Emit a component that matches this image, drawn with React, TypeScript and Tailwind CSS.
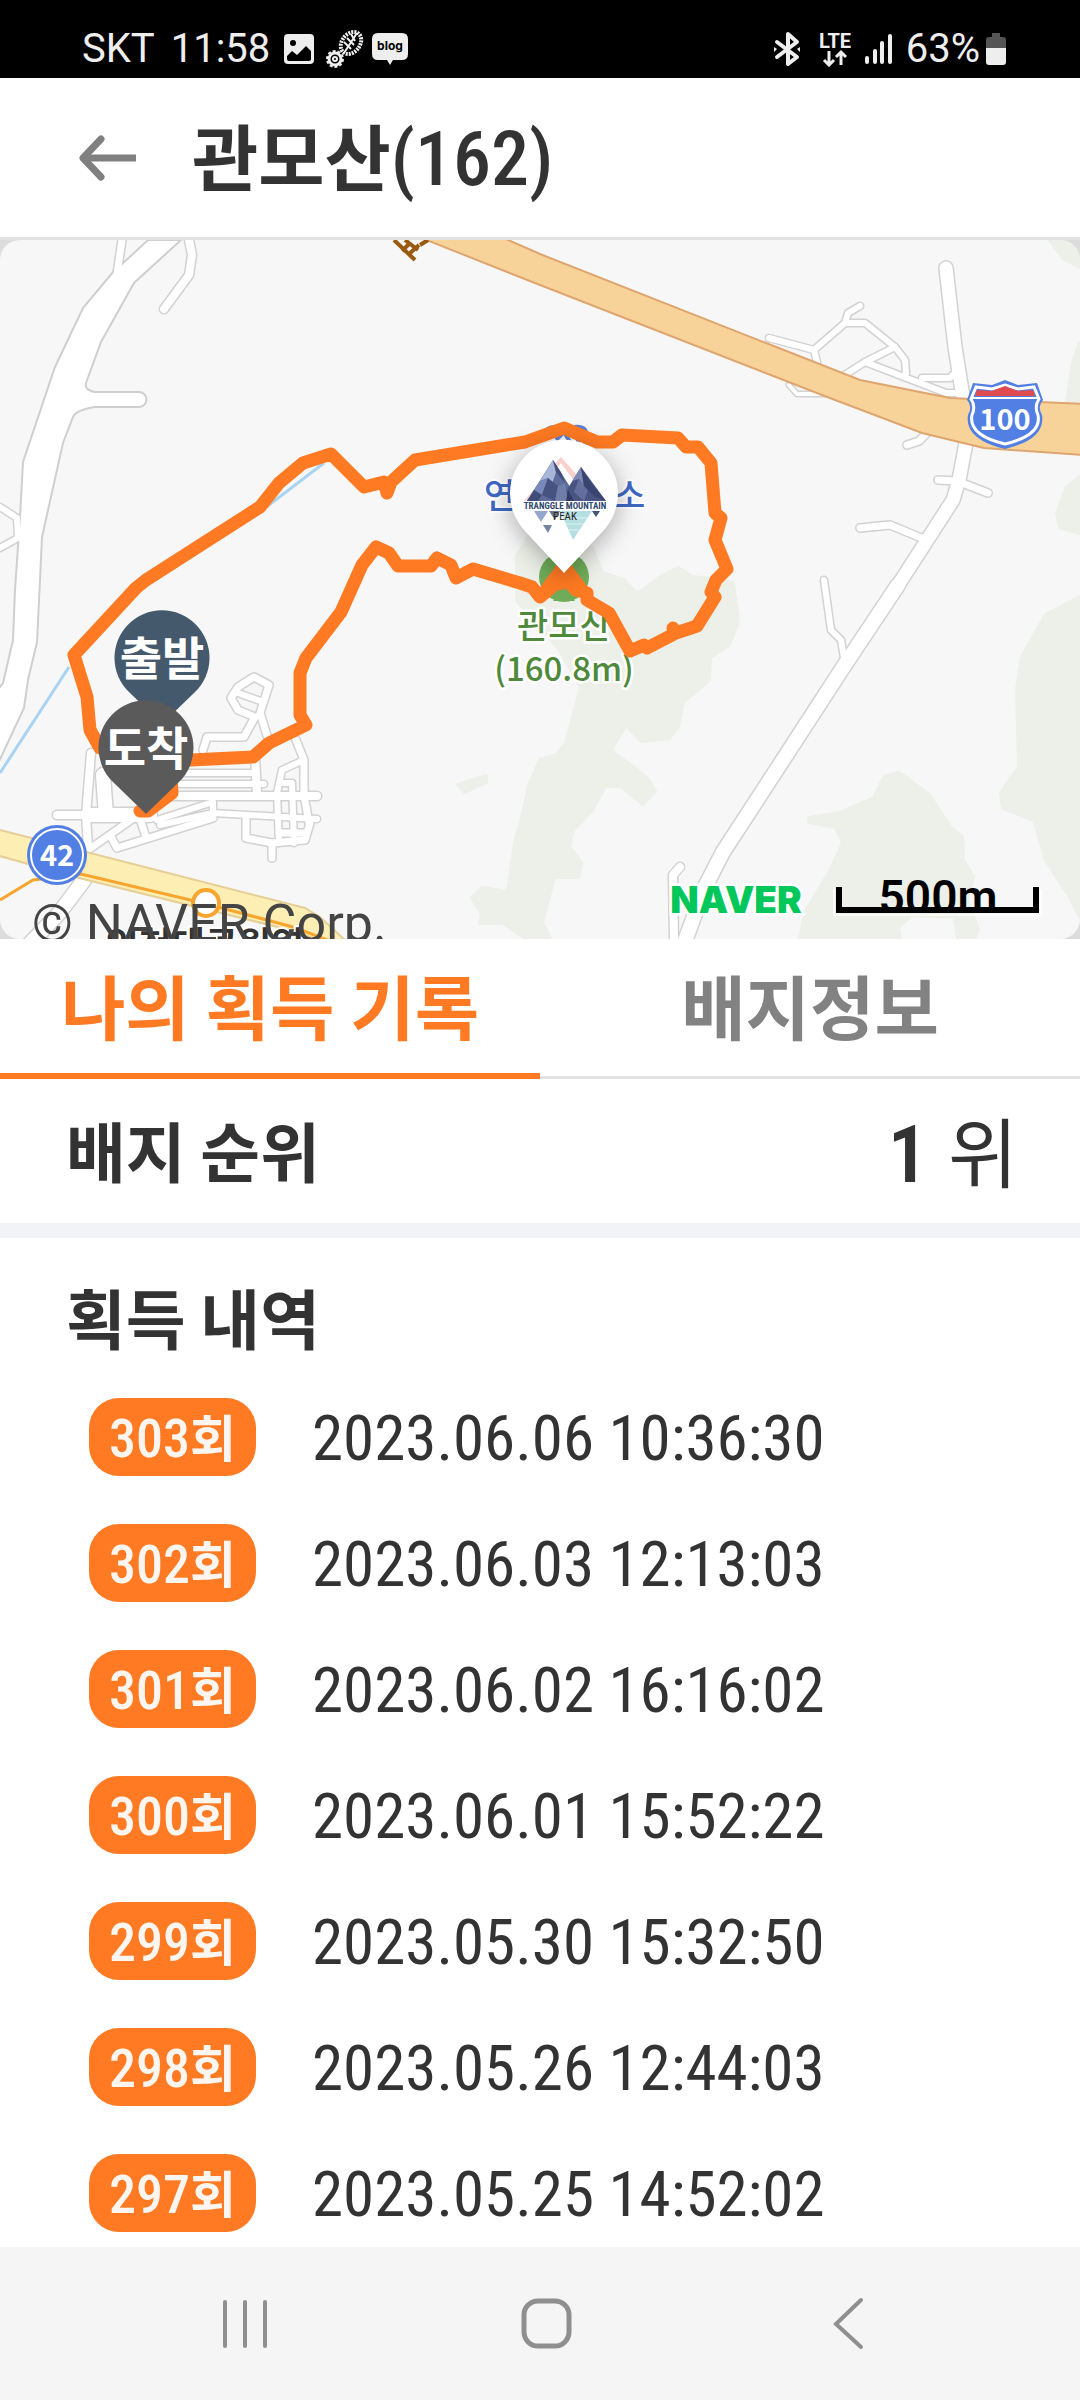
const records = [
  { count: 303, date: "2023.06.06 10:36:30" },
  { count: 302, date: "2023.06.03 12:13:03" },
  { count: 301, date: "2023.06.02 16:16:02" },
  { count: 300, date: "2023.06.01 15:52:22" },
  { count: 299, date: "2023.05.30 15:32:50" },
  { count: 298, date: "2023.05.26 12:44:03" },
  { count: 297, date: "2023.05.25 14:52:02" },
];

const forests = [
  "M517 556L530 535L564 530L592 548L602 573L624 580L636 593L642 591L659 578L678 568L692 577L719 580L733 583L738 622L729 645L710 657L709 680L683 702L678 727L669 738L642 741L626 725L612 748L614 753L647 778L655 791L643 804L621 786L605 786L592 810L573 830L569 847L581 863L578 877L554 877L542 923L550 939L527 939L503 923L480 923L482 914L472 898L482 888L508 892L515 843L524 810L529 785L540 760L557 755L566 743L581 687L560 650L517 600Z",
  "M458 785L486 776L486 782L465 792Z",
  "M809 818L840 813L874 798L884 777L898 773L908 779L929 795L950 827L962 837L963 860L973 877L967 900L978 930L974 939H958L955 917L912 915L898 927L900 939H800L805 913L829 873L843 843L836 827L809 822Z",
  "M1080 597L1046 615L1022 657L1017 690L1019 767L1001 793L1003 808L1034 820L1046 860L1070 897L1080 917Z",
  "M1080 477L1067 487L1057 513L1060 527L1080 533Z",
  "M1080 343L1073 363L1067 403H1080Z",
  "M1050 240L1063 258L1080 267V240Z",
];

const roads = [
  { d: "M122 240L117 274", w: 7 },
  { d: "M189 240L192 255L189 275L164 309", w: 8 },
  { d: "M0 507L17 518L18 538L0 548", w: 6 },
  { d: "M946 268L955 347L963 397L966 443L959 480L953 500L895 590", w: 13 },
  { d: "M898 585L844 666L781 763L723 852L705 887L685 941", w: 14 },
  { d: "M938 480L957 481L988 493", w: 7 },
  { d: "M860 528L890 525L924 539", w: 7 },
  { d: "M824 580L831 630L841 640L844 658", w: 6 },
  { d: "M907 445L919 441L928 432", w: 7 },
  { d: "M769 338L814 350L845 323L865 323L895 347L905 360L906 373", w: 6 },
  { d: "M845 323L848 313L860 306M814 350L817 362", w: 6 },
  { d: "M840 378L865 362L895 347M865 362L946 393H962", w: 6 },
  { d: "M922 378H950L957 370", w: 6 },
  { d: "M789 385L797 394H825", w: 4 },
  { d: "M680 867L673 875L674 941", w: 8 },
  { d: "M84 880L60 912L24 950", w: 14 },
  // housing estate
  { d: "M57 815H104M91 753L86 815L88 847", w: 8 },
  { d: "M103 775L106 815M90 815H150", w: 14 },
  { d: "M203 750L207 737H244L255 717L238 710L231 698L238 687L254 677L269 685L260 713L269 742", w: 7 },
  { d: "M238 693L263 702", w: 6 },
  { d: "M183 773H255M180 784H264", w: 6 },
  { d: "M172 796H317M255 757L257 793", w: 8 },
  { d: "M296 740L304 760V795L309 823", w: 7 },
  { d: "M304 760L282 770L277 793L279 843M280 783H292L294 843", w: 6 },
  { d: "M157 820L213 802V817M160 825L213 813L317 819", w: 6 },
  { d: "M246 820V838L272 843L305 840L310 823M279 833H305", w: 7 },
  { d: "M272 843V858", w: 7 },
  { d: "M88 850L131 820M110 835L117 848L213 818M141 822L146 837", w: 7 },
];

const leftRoad =
  "M148 240L121 265L113 272L83 308L55 367L23 462L20 517L15 590L13 640L3 683L-4 692V768L24 708L28 680L37 642L40 580L42 537L63 443L73 417Q76 410 95 407H139A7 7 0 0 0 139 392H95Q84 390 86 383L101 342L134 283L181 240Z";

const track =
  "M100 748L90 730L87 697L74 655L136 588L146 580L260 507L279 483L303 463L331 454L364 487L384 482L387 493L391 482L415 460L525 442L564 428L597 442H613L622 435L678 438L686 447H698L711 463L715 513L721 518L715 540L727 569L716 580L711 592L715 597L697 626L676 633L673 628L676 633L647 648L644 645L630 651L609 613L587 600V593L576 590L564 577L540 597L532 587L520 583L473 569L456 578L451 565L437 558L431 566H398L389 553L376 547L362 565L341 612L306 658L300 673V715L306 725L269 743L253 757L170 761L172 793L148 811H140";

function StatusBar() {
  return (
    <div className="flex items-center bg-black pt-5 pr-[72px] pl-[82px] text-[40px] leading-[58px] text-[#eeeeee]">
      <span>SKT</span>
      <span className="ml-4">11:58</span>
      <svg className="ml-3 h-[34px] w-[34px]" viewBox="0 0 34 34">
        <rect x="2" y="2" width="30" height="30" rx="4" fill="#eee" />
        <circle cx="11" cy="11" r="3" fill="#000" />
        <path d="M5 24L10 19L15 23L24 14L29 19V27Q29 29 27 29H7Q5 29 5 27Z" fill="#000" />
      </svg>
      <svg className="ml-2 h-10 w-10" viewBox="0 0 40 40" fill="none" stroke="#eee">
        <ellipse cx="27" cy="14" rx="9" ry="12" transform="rotate(38 27 14)" strokeWidth="4" strokeDasharray="2 1" />
        <path d="M33 4L20 24M27 5L31 12M23 9L30 16M20 13L27 20" strokeWidth="2" />
        <circle cx="11" cy="30" r="6" strokeWidth="3" />
        <circle cx="11" cy="30" r="8" strokeWidth="2" strokeDasharray="3 2" />
        <circle cx="11" cy="30" r="2" strokeWidth="2" />
      </svg>
      <svg className="ml-2 h-9 w-9" viewBox="0 0 36 36">
        <path d="M6 2H30Q36 2 36 8V23Q36 29 30 29H21L18 34L15 29H6Q0 29 0 23V8Q0 2 6 2Z" fill="#eee" />
        <text x="18" y="19" textAnchor="middle" fill="#000" className="font-['Inter'] text-[12px] font-bold">
          blog
        </text>
      </svg>
      <svg className="ml-auto h-9 w-[30px]" viewBox="0 0 30 36" fill="none" stroke="#eee" strokeWidth="4" strokeLinejoin="round" strokeLinecap="round">
        <path d="M5 11L25 26L16 33V3L25 11L5 26" />
        <path d="M2 16V21L5 18ZM28 16V21L25 18Z" fill="#eee" stroke="none" />
      </svg>
      <svg className="ml-4 h-9 w-[34px]" viewBox="0 0 34 36" fill="none" stroke="#eee" strokeWidth="2">
        <text x="17" y="17" textAnchor="middle" fill="#eee" stroke="none" className="font-['Roboto'] text-[20px] font-bold">
          LTE
        </text>
        <path d="M11 20V34M6 29L11 34L16 29M23 34V21M18 26L23 21L28 26" strokeWidth="3" />
      </svg>
      <svg className="ml-3 h-[34px] w-[30px]" viewBox="0 0 30 34" stroke="#eee" strokeWidth="4" strokeLinecap="round">
        <path d="M3 26V30M11 19V30M18 11V30M26 4V30" />
      </svg>
      <span className="ml-3">63%</span>
      <svg className="ml-1 h-9 w-6" viewBox="0 0 24 36">
        <path d="M8 2H16V6H19Q22 6 22 9V18H2V9Q2 6 5 6H8Z" fill="#555" />
        <path d="M2 17H22V31Q22 34 19 34H5Q2 34 2 31Z" fill="#eee" />
      </svg>
    </div>
  );
}

function Header() {
  return (
    <header className="flex items-center border-b-[3px] border-[#e2e2e2] bg-white py-5 pl-[78px]">
      <button type="button" aria-label="뒤로" className="mr-[54px]">
        <svg className="h-12 w-[60px]" viewBox="0 0 60 48" fill="none" stroke="#808080" strokeWidth="7">
          <path d="M23 5L5 24L23 43" strokeLinecap="round" strokeLinejoin="round" />
          <path d="M5 24H58" />
        </svg>
      </button>
      <h1 className="pb-2 text-[72px] leading-[111px] font-bold">
        관모산<span className="font-['Roboto_Condensed','Roboto'] text-[76px] leading-none font-medium">(162)</span>
      </h1>
    </header>
  );
}

function MountainLogo() {
  return (
    <g>
      <path d="M524 501L561 457L590 490Z" fill="#fbd0cc" />
      <path d="M556 469L561 463L583 493L570 497Z" fill="#fff" />
      <path d="M527 501L553 460L579 501Z" fill="#5d6c9b" />
      <path d="M560 501L581 467L606 501Z" fill="#4a5482" />
      <path d="M553 460L540 481L548 478L552 484L556 472Z" fill="#a9b6da" />
      <path d="M581 467L572 481L579 479L584 486Z" fill="#7c89b4" />
      <path d="M553 460L556 472L565 483L562 474Z" fill="#434e7c" />
      <path d="M540 481L534 490L542 495L548 478Z" fill="#7889bc" />
      <path d="M548 478L542 495L555 501L558 486Z" fill="#46527f" />
      <path d="M558 486L555 501H568L565 483Z" fill="#6f7da9" />
      <path d="M568 490L574 501H566Z" fill="#323c66" />
      <path d="M579 479L574 492L584 501L588 490Z" fill="#646fa0" />
      <path d="M581 467L590 482L606 501L594 496L584 486Z" fill="#3a4470" />
      <path d="M534 490L527 501H538L542 495Z" fill="#404c78" />
      <path d="M534 511H548L541 522Z" fill="#94a5ce" />
      <path d="M549 511H560L555 520Z" fill="#6c788f" />
      <path d="M543 525H552L548 533Z" fill="#74839f" />
      <path d="M592 511H600L596 517Z" fill="#3f5675" />
      <path d="M560 511H592L573 540Z" fill="#b5dfe0" />
      <path d="M562 518H588M566 524H584M568 530H580" stroke="#dff2f2" />
      <text x="565" y="509" textAnchor="middle" fill="#2f4a6e" className="font-['Roboto_Condensed','Roboto'] text-[9px] font-bold">
        TRANGGLE MOUNTAIN
      </text>
      <text x="565" y="520" textAnchor="middle" fill="#222" className="font-['Roboto_Condensed','Roboto'] text-[11px]">
        PEAK
      </text>
    </g>
  );
}

function TrackMap() {
  return (
    <div className="bg-[#dcdcdc]">
      <svg className="block w-full rounded-[20px]" viewBox="0 240 1080 699">
        <rect y="240" width="1080" height="699" fill="#f7f7f7" />
        {forests.map((d) => (
          <path key={d} d={d} fill="#edf0e9" stroke="#edf0e9" strokeWidth="4" strokeLinejoin="round" />
        ))}

        <path d="M324 463L265 508L140 590M69 667L0 773" fill="none" stroke="#a9d3f2" strokeWidth="3" />

        <g fill="none" stroke="#d2d2d2" strokeLinecap="round" strokeLinejoin="round">
          {roads.map((r) => (
            <path key={r.d} d={r.d} strokeWidth={r.w + 3} />
          ))}
        </g>
        <path d={leftRoad} fill="#fff" stroke="#cfcfcf" strokeWidth="2" />
        <g fill="none" stroke="#fff" strokeLinecap="round" strokeLinejoin="round">
          {roads.map((r) => (
            <path key={r.d} d={r.d} strokeWidth={r.w} />
          ))}
        </g>

        <path
          d="M424 239L506 239L540 254L860 380L950 398L1084 404V455L984 448L922 433L822 395L540 285Z"
          fill="#f8d399"
          stroke="#dfa56f"
          strokeWidth="2"
        />
        <path d="M394 240L415 260M402 251L409 244M409 254L419 245M405 240L418 250M420 245L428 240" stroke="#9a5a10" strokeWidth="4" />

        <path d="M-4 829L90 853L305 908L320 917L346 941L322 941L290 930L79 878L-4 855Z" fill="#fdeeb3" stroke="#e5cf96" strokeWidth="2" />
        <path d="M0 900L33 880L81 874L203 903L293 927L330 941" fill="none" stroke="#f7a52e" strokeWidth="3" />
        <circle cx="206" cy="903" r="13" fill="#fff" stroke="#f7a52e" strokeWidth="4" />

        <circle cx="57" cy="855" r="30" fill="#527fe4" />
        <circle cx="57" cy="855" r="26" fill="none" stroke="#fff" strokeWidth="2" />
        <text x="57" y="866" textAnchor="middle" fill="#fff" className="text-[29px] font-bold">
          42
        </text>

        <path
          d="M1005 380L1018 385L1037 383L1043 400Q1037 406 1042 415Q1046 439 1005 449Q964 439 968 415Q973 406 967 400L973 383L992 385Z"
          fill="#527fe4"
        />
        <path
          d="M1005 385L1018 389L1034 387L1039 399Q1034 406 1038 415Q1042 435 1005 444Q968 435 972 415Q976 406 971 399L976 387L992 389Z"
          fill="#527fe4"
          stroke="#fff"
          strokeWidth="3"
        />
        <path d="M977 390L992 391L1005 386L1018 391L1033 390L1035 396H975Z" fill="#e04b4f" />
        <path d="M972 398H1038" stroke="#fff" strokeWidth="2" />
        <text x="1005" y="430" textAnchor="middle" fill="#fff" className="text-[29px] font-bold">
          100
        </text>

        <g fill="#3f68c4" stroke="#fff" strokeWidth="4" paintOrder="stroke" className="text-[34px] font-medium">
          <text x="484" y="508">연</text>
          <text x="614" y="508">소</text>
        </g>
        <path d="M543 436Q546 426 556 427M556 440L564 432L570 442M574 427Q586 425 587 436M578 434V446M585 436V446" fill="none" stroke="#5b7fd6" strokeWidth="4" />

        <circle cx="564" cy="577" r="25" fill="#70ad59" />
        <path d="M564 555L590 590H538Z" fill="#ff7a22" />
        <path d="M564 588L575 601H553Z" fill="#70ad59" />
        <g fill="#4f8a3c" stroke="#fff" strokeWidth="5" paintOrder="stroke" strokeLinejoin="round" className="text-[33px] font-medium">
          <text x="564" y="638" textAnchor="middle" className="text-[34px]">관모산</text>
          <text x="564" y="681" textAnchor="middle">(160.8m)</text>
        </g>

        <path d={track} fill="none" stroke="#ff7a22" strokeWidth="13" strokeLinejoin="round" strokeLinecap="round" />

        <path d="M162 724L129 692A47.5 47.5 0 1 1 195 692Z" fill="#45596d" />
        <path d="M146 814L113 782A47.5 47.5 0 1 1 179 782Z" fill="#5a5a5a" />
        <g fill="#fff" className="text-[46px] font-bold">
          <text x="162" y="675" textAnchor="middle">출발</text>
          <text x="146" y="765" textAnchor="middle">도착</text>
        </g>

        <path
          d="M564 573L524 530A54 54 0 1 1 604 530Z"
          fill="#fff"
          className="drop-shadow-[0_6px_12px_rgba(0,0,0,0.3)]"
        />
        <MountainLogo />

        <text x="736" y="913" textAnchor="middle" fill="#03c75a" stroke="#fff" strokeWidth="5" paintOrder="stroke" className="font-['Inter'] text-[37px] font-black">
          NAVER
        </text>
        <text x="938" y="913" textAnchor="middle" className="font-['Roboto'] text-[46px] font-semibold">
          500m
        </text>
        <path d="M834 889V915H1041V889" fill="none" stroke="#fff" strokeOpacity="0.7" strokeWidth="2" />
        <path d="M839 887V910H1036V887" fill="none" stroke="#000" strokeWidth="6" />

        <text x="205" y="958" textAnchor="middle" fill="#333" stroke="#fff" strokeWidth="4" paintOrder="stroke" className="text-[36px] font-bold">
          인천대공원역
        </text>
        <text x="32" y="941" fill="#444" className="font-['Roboto'] text-[52px]">
          © NAVER Corp.
        </text>
      </svg>
    </div>
  );
}

function Tabs() {
  return (
    <div role="tablist" className="grid grid-cols-2 bg-white text-[70px] leading-[132px] font-bold">
      <button type="button" role="tab" aria-selected="true" className="border-b-[6px] border-[#ff7a22] pb-[2px] text-[#ff7a22]">
        나의 획득 기록
      </button>
      <button type="button" role="tab" aria-selected="false" className="border-b-[3px] border-[#e2e2e2] pb-[5px] text-[#828282]">
        배지정보
      </button>
    </div>
  );
}

function RecordRow({ count, date }: { count: number; date: string }) {
  return (
    <li className="flex items-center gap-14">
      <span className="rounded-[30px] bg-[#ff7a22] px-5 pb-1 text-[50px] leading-[74px] font-bold text-[#fdf6f0]">
        <span className="font-['Roboto_Condensed','Roboto'] text-[54px] leading-none font-medium">{count}</span>회
      </span>
      <time className="pt-1 font-['Roboto_Condensed','Roboto'] text-[63px] leading-[74px]">{date}</time>
    </li>
  );
}

function NavBar() {
  return (
    <nav className="mt-auto grid grid-cols-3 justify-items-center bg-[#f5f5f5] pt-12 pr-20 pb-12 pl-[93px] text-[#8f8f8f]">
      <button type="button" aria-label="최근 앱">
        <svg className="h-[57px] w-[57px]" viewBox="0 0 57 57" stroke="currentColor" strokeWidth="4" strokeLinecap="round">
          <path d="M9 7V51M29 7V51M49 7V51" />
        </svg>
      </button>
      <button type="button" aria-label="홈">
        <svg className="h-[57px] w-[57px]" viewBox="0 0 57 57" fill="none" stroke="currentColor" strokeWidth="5">
          <rect x="6" y="6" width="45" height="45" rx="14" />
        </svg>
      </button>
      <button type="button" aria-label="이전">
        <svg className="h-[57px] w-[57px]" viewBox="0 0 57 57" fill="none" stroke="currentColor" strokeWidth="4" strokeLinecap="round">
          <path d="M41 5L16 29L41 52" />
        </svg>
      </button>
    </nav>
  );
}

export default function App() {
  return (
    <div className="flex min-h-screen flex-col bg-white font-['Roboto','Noto_Sans_CJK_KR',sans-serif] text-[#333333]">
      <StatusBar />
      <div className="flex flex-col font-['Noto_Sans_CJK_KR',sans-serif]">
        <Header />
        <TrackMap />
        <Tabs />
        <div className="flex items-center justify-between border-b-[15px] border-[#f1f3f6] pr-[62px] pb-1 pl-[66px] leading-[140px]">
          <h2 className="text-[65px] font-bold">배지 순위</h2>
          <p className="text-[76px]">
            <strong className="mr-5 font-['Roboto_Condensed','Roboto'] text-[80px] leading-none font-semibold">1</strong>위
          </p>
        </div>
        <section>
          <h2 className="px-[66px] pb-1 text-[65px] leading-[156px] font-bold">획득 내역</h2>
          <ol className="flex flex-col gap-12 pr-6 pb-[15px] pl-[89px]">
            {records.map((r) => (
              <RecordRow key={r.count} count={r.count} date={r.date} />
            ))}
          </ol>
        </section>
      </div>
      <NavBar />
    </div>
  );
}
